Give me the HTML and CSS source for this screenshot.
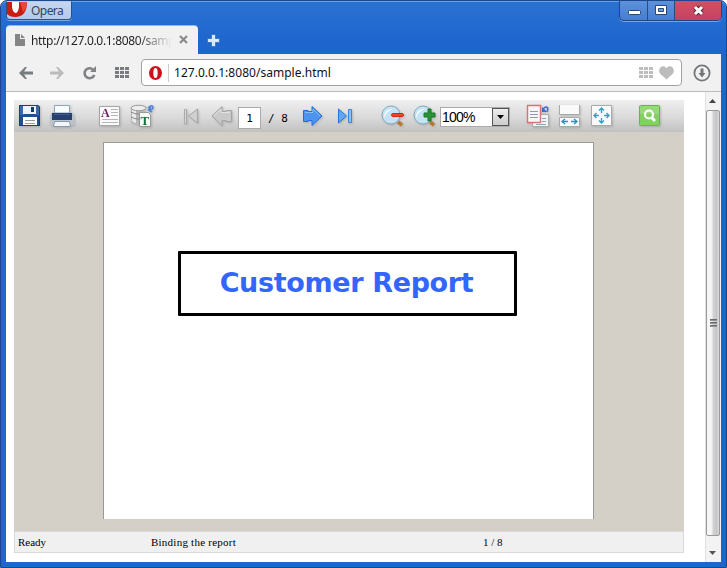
FILE: index.html
```html
<!DOCTYPE html>
<html lang="en">
<head>
<meta charset="utf-8">
<title>Customer Report</title>
<link rel="stylesheet" href="styles.css">
</head>
<body>
<div class="window">
  <header class="titlebar">
    <div class="opera-menu">
      <svg width="21" height="16" viewBox="0 0 21 16"><path d="M0 0H20Q20 15 8 15Q3 15 0 12Z" fill="#c91c13"/><path d="M0 0H20Q20 7 16 10L13 0Z" fill="#e94a38"/><path d="M5 0H12V5Q11 11 8.500 11Q5.500 10 5 5Z" fill="#fff"/></svg>
      <span class="opera-label">Opera</span>
    </div>
    <div class="controls">
      <span class="control min"><svg width="28" height="18"><rect x="8.500" y="9.500" width="12" height="4" rx="1" fill="#fff" stroke="#294579"/></svg></span>
      <span class="control"><svg width="26" height="18"><path d="M7.500 4.500h11v9h-11z" fill="#fff" stroke="#294579"/><path d="M10.500 7.500h5v3h-5z" fill="#6c9ee0" stroke="#294579"/></svg></span>
      <span class="control close"><svg width="46" height="18"><path d="M20 6L27 13M27 6L20 13" stroke="#642239" stroke-width="5"/><path d="M20 6L27 13M27 6L20 13" stroke="#fff" stroke-width="3"/></svg></span>
    </div>
  </header>
  <nav class="tabs">
    <div class="tab">
      <svg width="10" height="12"><path d="M0 0H5V5H10V12H0Z" fill="#858585"/><path d="M6 0L10 4H6Z" fill="#858585"/></svg>
      <span class="tab-title">http://127.0.0.1:8080/sample.html</span>
      <svg width="10" height="10"><path d="M1 1L8 8M8 1L1 8" stroke="#8b8b8b" stroke-width="2.200"/></svg>
    </div>
    <svg class="new-tab" width="13" height="13"><path d="M4.500 .5h4v4h4v4h-4v4h-4v-4h-4v-4h4z" fill="#d9e9fa" stroke="#3c76c8"/></svg>
  </nav>
  <div class="navigation">
    <svg class="back" width="14" height="12"><path d="M0 6L6 0H8L5 4.500H14V7.500H5L8 12H6Z" fill="#777c80"/></svg>
    <svg class="forward" width="14" height="12"><path d="M14 6L8 0H6L9 4.500H0V7.500H9L6 12H8Z" fill="#b9bbbd"/></svg>
    <svg class="reload" width="14" height="14"><path d="M10 3.500A5 5 0 1 0 11.300 9" fill="none" stroke="#808386" stroke-width="2.600"/><path d="M13 0V6H7Z" fill="#808386"/></svg>
    <svg class="dial" width="14" height="11"><path d="M0 1.500H14M0 5.500H14M0 9.500H14" stroke="#777b7f" stroke-width="3" stroke-dasharray="4 1"/></svg>
    <div class="address">
      <svg width="13" height="14"><ellipse cx="6.500" cy="7" rx="6.500" ry="7" fill="#c9121c"/><ellipse cx="6.500" cy="7" rx="2.200" ry="5" fill="#fff"/></svg>
      <span class="url">127.0.0.1:8080/sample.html</span>
      <svg width="14" height="11"><path d="M0 1.500H14M0 5.500H14M0 9.500H14" stroke="#bdbdbd" stroke-width="3" stroke-dasharray="4 1"/></svg>
      <svg class="heart" width="15" height="14" viewBox="0 0 15 14"><path d="M7.500 13.500L1.500 8C-2 4 2-1 5.500 .5Q7 1 7.500 2.500Q8 1 9.500 .5C13-1 17 4 13.500 8Z" fill="#bcbcbc"/></svg>
    </div>
    <svg class="download" width="18" height="18"><circle cx="9" cy="9" r="7.600" fill="none" stroke="#74777a" stroke-width="1.800"/><path d="M7.500 4.500H10.500V9H12.500L9 13.500L5.500 9H7.500Z" fill="#74777a"/></svg>
  </div>
  <div class="content">
    <main class="viewer">
      <div class="toolbar">
        <svg class="tool"><path d="M5 5H24L26 7V26H5Z" fill="#234e8c"/><path d="M6 6H10V15H6ZM22 6H25V15H22Z" fill="#376aa6"/><path d="M9 6H22V14H9Z" fill="#edf2f8"/><path d="M17 7H20V12H17Z" fill="#173969"/><path d="M9 17H23V26H9Z" fill="#fff"/><path d="M11 20.500H21M11 23.500H21" stroke="#999"/><path d="M5.500 5.500H24L25.500 7V25.500H5.500Z" fill="none" stroke="#1d3f70"/></svg>
        <svg class="tool"><path d="M8.500 5.500H23.500V14H8.500Z" fill="#f9fbfd" stroke="#90a4be"/><path d="M4 15L7 12H25L28 15V25H4Z" fill="#bcc3cb"/><path d="M8.500 6V13H23.500V6" fill="#f9fbfd" stroke="#90a4be"/><path d="M6 13H26V20H6Z" fill="#26406f"/><path d="M8 14.500H24" stroke="#415b8a"/><path d="M8.500 21.500H23.500L24.500 26.500H7.500Z" fill="#f0f6fc" stroke="#8b98a9"/></svg>
        <svg class="tool after-gap"><path d="M5.500 6.500H25.500V25.500H5.500Z" fill="#fafafa" stroke="#a5a5a5"/><text class="letter-a" x="7" y="17">A</text><path d="M17 9.500H24M17 12.500H24M17 15.500H24M8 19.500H24M8 22.500H24" stroke="#b5b5b5"/></svg>
        <svg class="tool"><path d="M5 8V22Q9 26 18 24V8Z" fill="#b7b7b7"/><path d="M6 8V21Q8 23 10 23V8Z" fill="#e9e9e9"/><ellipse cx="12.500" cy="8" rx="7.500" ry="2.700" fill="#ededed" stroke="#999"/><path d="M5 12Q12 16 20 12M5 17Q12 21 20 17" fill="none" stroke="#888"/><path d="M13.500 12.500H22.500L24.500 15V26.500H13.500Z" fill="#f6fbf5" stroke="#999"/><text class="letter-t" x="14.500" y="24.500">T</text><path d="M22 8Q26 4 27 7Q27 10 23 10M25 7L22.500 10L26 12" stroke="#4b83d9" stroke-width="1.500" fill="none"/></svg>
        <svg class="tool after-gap disabled"><path d="M10.500 9.500H12.500V23.500H10.500Z" fill="#d8d8d8" stroke="#aaa"/><path d="M23.500 9V23L14.500 16Z" fill="#cfcfcf" stroke="#a6a6a6"/></svg>
        <svg class="tool disabled"><path d="M6 16L16 6.500V11.500H20V10.500H25.500V21.500H20V20.500H16V25.500Z" fill="#c9c9c9" stroke="#a5a5a5"/><path d="M8 16L15 9V12.500H24" fill="none" stroke="#e2e2e2"/></svg>
        <input class="page-number" value="1" aria-label="Page number"><span class="page-count">/ 8</span>
        <svg class="tool"><path d="M25 16L15 6.500V11.500H11V10.500H6.500V21.500H11V20.500H15V25.500Z" fill="#4c94ed" stroke="#246cdd"/><path d="M8 12.500H16V9L23 16" fill="none" stroke="#83bcfb"/></svg>
        <svg class="tool"><path d="M9.500 9V23L17.500 16Z" fill="#63a6f2" stroke="#2873d8"/><path d="M19.500 9.500H22.500V22.500H19.500Z" fill="#8abff8" stroke="#3a82df"/></svg>
        <svg class="tool after-gap lens"><path d="M21 22L25 25" stroke="#b6782f" stroke-width="3.500"/><circle cx="14" cy="15" r="9" fill="#c7e3f3" stroke="#82a7c1"/><path d="M7 15Q9 8 16 9Q9 12 7 18Z" fill="#edf9ff"/><rect x="14.500" y="13.500" width="12" height="3" rx="1.500" fill="#ed4520" stroke="#cf2c13"/></svg>
        <svg class="tool lens"><path d="M21 22L25 25" stroke="#b6782f" stroke-width="3.500"/><circle cx="14" cy="15" r="9" fill="#c7e3f3" stroke="#82a7c1"/><path d="M7 15Q9 8 16 9Q9 12 7 18Z" fill="#edf9ff"/><path d="M19 9H22V13H26V17H22V21H19V17H15V13H19Z" fill="#299235" stroke="#1d7b28"/></svg>
        <div class="zoom"><span>100%</span><button class="zoom-arrow" aria-label="Choose zoom"><svg width="7" height="4"><path d="M0 0H7L3.500 4Z"/></svg></button></div>
        <svg class="tool layout-tool"><path d="M10.500 14.500H26.500V26.500H10.500Z" fill="#f1f4f6" stroke="#aaa"/><path d="M20 18.500H24M20 21.500H24M14 24.500H24" stroke="#91a3b5"/><path d="M5.500 5.500H18.500V22.500H5.500Z" fill="#f6f6f6" stroke="#d57777" stroke-width="1.400"/><path d="M8 11.500H16M8 14.500H16M8 17.500H16" stroke="#8a9caf"/><path d="M25 12Q27 7 24 7Q22 7 21 10" stroke="#3c6dcc" stroke-width="1.500" fill="none"/><path d="M20 7V12H25Z" fill="#3c6dcc"/></svg>
        <svg class="tool"><path d="M5.500 5V14.500H25.500V5M5.500 26.500V17.500H25.500V26.500Z" fill="#fafafa" stroke="#aaa"/><path d="M8 21.500H14M17 21.500H23M11 19L8 21.500L11 24M20 19L23 21.500L20 24" fill="none" stroke="#2795bd" stroke-width="1.400"/></svg>
        <svg class="tool"><path d="M5.500 5.500H25.500V25.500H5.500Z" fill="#fafafa" stroke="#aaa"/><path d="M15.500 8V13M15.500 18V23M8 15.500H13M18 15.500H23M13 10.500L15.500 8L18 10.500M13 20.500L15.500 23L18 20.500M10.500 13L8 15.500L10.500 18M20.500 13L23 15.500L20.500 18" fill="none" stroke="#31a1cc" stroke-width="1.400"/></svg>
        <svg class="tool after-gap"><rect x="5.500" y="5.500" width="20" height="20" rx="1" fill="#83cf62" stroke="#65b849"/><path d="M6 6H25V14H6Z" fill="#95d979"/><circle cx="15" cy="14.500" r="4" fill="none" stroke="#fff" stroke-width="2.200"/><path d="M17.500 17.500L21 21" stroke="#fff" stroke-width="3"/></svg>
      </div>
      <div class="report-area"><div class="report-page"><h1>Customer Report</h1></div></div>
      <footer><span class="status">Ready</span><span class="message">Binding the report</span><span>1 / 8</span></footer>
    </main>
    <div class="scrollbar">
      <svg width="14" height="18"><path d="M3 11H10L6.500 7Z" fill="#444"/></svg>
      <div class="thumb"><i></i><i></i><i></i></div>
      <svg width="14" height="25"><path d="M3 15H10L6.500 19Z" fill="#555"/></svg>
    </div>
  </div>
</div>
</body>
</html>
```

FILE: styles.css
```css
* { box-sizing: border-box; }
body { margin: 0; background: #fff; font-family: "Noto Sans", sans-serif; overflow: hidden; }
svg { display: block; flex-shrink: 0; }
.window { width: 727px; height: 568px; padding: 0 5px 5px; border: 1px solid #1d468c; border-radius: 7px 7px 0 0; background: linear-gradient(#2c72d2, #1e66ce 40px); box-shadow: inset 0 1px #5ea7f0; }
.titlebar { height: 25px; display: flex; justify-content: space-between; align-items: flex-start; }
.opera-menu { width: 66px; height: 19px; display: flex; border: 1px solid #344f7a; border-top-color: #b4cdf0; border-radius: 0 0 4px 4px; background: linear-gradient(#c6d6ef, #b3caeb); box-shadow: 0 1px #78a9e6; color: #35435b; font-size: 12px; line-height: 18px; overflow: hidden; }
.opera-label { margin-left: 3px; letter-spacing: -.55px; }
.controls { height: 20px; width: 103px; margin-right: -1px; display: flex; border: 1px solid #21457f; border-top: 0; border-radius: 0 0 5px 5px; overflow: hidden; background: linear-gradient(#5c91db, #477fcd); box-shadow: 0 1px #73a6e5; }
.control { width: 27px; border-right: 1px solid #294b83; }
.control.min { width: 28px; }
.control.close { width: 46px; border: 0; background: linear-gradient(#cd5069, #c7425c); }
.tabs { height: 28px; display: flex; align-items: center; }
.tab { width: 192px; height: 28px; padding: 0 9px; display: flex; align-items: center; background: #f1f1f1; border-radius: 4px 4px 0 0; box-shadow: 0 -1px #8abbf1; }
.tab-title { width: 142px; margin: 0 7px 0 6px; font-size: 12px; letter-spacing: -.32px; white-space: nowrap; overflow: hidden; color: transparent; background: linear-gradient(90deg, #202020 75%, transparent); background-clip: text; }
.new-tab { margin-left: 9px; }
.navigation { height: 38px; display: flex; align-items: center; background: #f1f1f1; border-bottom: 1px solid #bababa; }
.back { margin-left: 13px; }
.forward { margin-left: 17px; }
.reload { margin-left: 19px; }
.dial { margin-left: 18px; }
.address { width: 541px; height: 27px; margin-left: 12px; padding: 0 7px; display: flex; align-items: center; border: 1px solid #a2a2a2; border-radius: 4px; background: #fff; }
.url { flex: 1; height: 18px; margin-left: 6px; padding-left: 5px; border-left: 1px solid #ccc; font-size: 12px; line-height: 18px; letter-spacing: .03px; color: #111; }
.heart { margin-left: 6px; }
.download { margin-left: 11px; }
.content { height: 470px; display: flex; justify-content: space-between; background: #fff; }
.viewer { width: 670px; margin: 8px 0 0 8px; }
.toolbar { height: 32px; display: flex; align-items: center; background: linear-gradient(#efefef, #dadada 55%, #c1c1c1); }
.tool { width: 32px; height: 32px; filter: drop-shadow(1px 1px 1px #8887); }
.after-gap { margin-left: 16px; }
.letter-a { font: bold 12px "Liberation Serif", serif; fill: #74226b; }
.letter-t { font: bold 13px "Liberation Serif", serif; fill: #16733a; }
.page-number { width: 23px; height: 22px; margin: 4px 0 0; padding: 0; border: 1px solid #aaa; text-align: center; background: #fff; font: 11px "DejaVu Sans Mono", monospace; }
.page-count { width: 36px; padding: 4px 0 0 7px; font: 11px "DejaVu Sans Mono", monospace; white-space: nowrap; }
.zoom { width: 70px; height: 20px; margin: 1px 1px 0 -1px; display: flex; justify-content: space-between; align-items: center; padding: 0 0 0 2px; border: 1px solid #aaa; background: #fff; font: 14px "Liberation Sans", sans-serif; letter-spacing: -.8px; }
.zoom span { margin-left: -1px; }
.zoom-arrow { width: 17px; height: 18px; display: grid; place-items: center; padding: 0; border: 1px solid #555; background: linear-gradient(#eee, #ccc); }
.layout-tool { margin-left: 11px; }
.report-area { height: 399px; padding: 10px 0 0 89px; background: #d4d0c8; }
.report-page { width: 491px; height: 377px; padding: 108px 0 0 74px; border: 1px solid #999; border-bottom: 0; background: #fff; }
h1 { width: 339px; height: 65px; margin: 0; padding-right: 2px; border: 3px solid #000; border-radius: 1px; color: #36f; font: bold 27px/57px "DejaVu Sans", sans-serif; text-align: center; letter-spacing: -.35px; white-space: nowrap; }
footer { height: 22px; display: flex; padding: 0 3px; border: 1px solid #dadada; background: #f0f0f0; font: 11px/21px "Liberation Serif", serif; }
.status { width: 133px; }
.message { width: 332px; letter-spacing: .24px; }
.scrollbar { width: 16px; padding-right: 1px; border-left: 1px solid #e0e0e0; background: #f3f3f3; }
.thumb { height: 426px; display: flex; flex-direction: column; justify-content: center; align-items: center; gap: 1px; border: 1px solid #999; border-radius: 2px; background: linear-gradient(90deg, #f6f6f6 35%, #d0d0d5 55%, #c5c5ca 80%, #ddd); }
.thumb i { width: 7px; height: 2px; background: linear-gradient(#555, #aaa); }
```
